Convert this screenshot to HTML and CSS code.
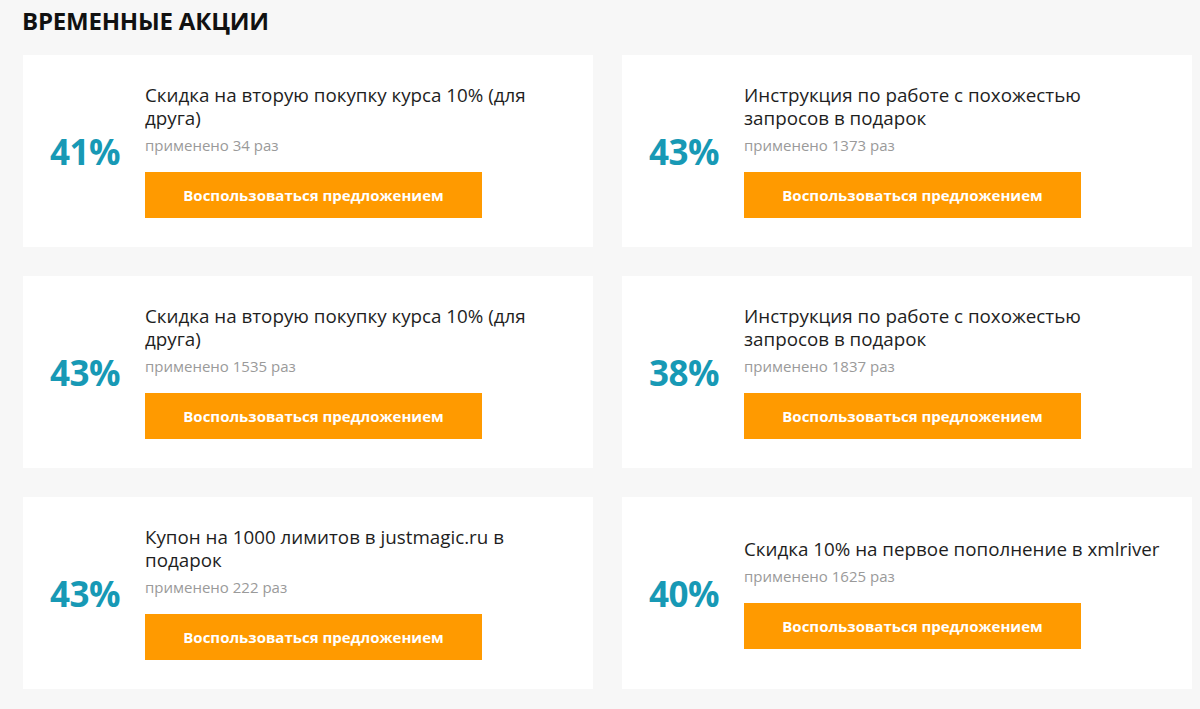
FILE: index.html
```html
<!DOCTYPE html>
<html lang="ru">
<head>
<meta charset="utf-8">
<title>Временные акции</title>
<link rel="stylesheet" href="styles.css">
</head>
<body>
<main class="page">
  <h1 class="heading">ВРЕМЕННЫЕ АКЦИИ</h1>
  <div class="grid">
    <div class="card">
      <div class="percent">41%</div>
      <div class="info">
        <div class="title">Скидка на вторую покупку курса 10% (для друга)</div>
        <div class="used">применено 34 раз</div>
        <a class="btn" href="#">Воспользоваться предложением</a>
      </div>
    </div>
    <div class="card">
      <div class="percent">43%</div>
      <div class="info">
        <div class="title">Инструкция по работе с похожестью запросов в подарок</div>
        <div class="used">применено 1373 раз</div>
        <a class="btn" href="#">Воспользоваться предложением</a>
      </div>
    </div>
    <div class="card">
      <div class="percent">43%</div>
      <div class="info">
        <div class="title">Скидка на вторую покупку курса 10% (для друга)</div>
        <div class="used">применено 1535 раз</div>
        <a class="btn" href="#">Воспользоваться предложением</a>
      </div>
    </div>
    <div class="card">
      <div class="percent">38%</div>
      <div class="info">
        <div class="title">Инструкция по работе с похожестью запросов в подарок</div>
        <div class="used">применено 1837 раз</div>
        <a class="btn" href="#">Воспользоваться предложением</a>
      </div>
    </div>
    <div class="card">
      <div class="percent">43%</div>
      <div class="info">
        <div class="title">Купон на 1000 лимитов в justmagic.ru в подарок</div>
        <div class="used">применено 222 раз</div>
        <a class="btn" href="#">Воспользоваться предложением</a>
      </div>
    </div>
    <div class="card">
      <div class="percent">40%</div>
      <div class="info">
        <div class="title">Скидка 10% на первое пополнение в xmlriver</div>
        <div class="used">применено 1625 раз</div>
        <a class="btn" href="#">Воспользоваться предложением</a>
      </div>
    </div>
  </div>
</main>
</body>
</html>
```
FILE: styles.css
```css
html, body {
  margin: 0;
  padding: 0;
  background: #f7f7f7;
}
body {
  font-family: "Open Sans", "Liberation Sans", sans-serif;
  color: #1e1e1e;
}
.page {
  padding: 5px 8px 20px 23px;
}
.heading {
  margin: 0 0 0 -1px;
  font-size: 24px;
  line-height: 32px;
  font-weight: 700;
  color: #111;
  letter-spacing: -0.2px;
}
.grid {
  margin-top: 18px;
  display: grid;
  grid-template-columns: 570px 570px;
  column-gap: 29px;
  row-gap: 29px;
}
.card {
  background: #fff;
  height: 192px;
  box-sizing: border-box;
  padding: 0 30px 0 27px;
  display: flex;
  align-items: center;
}
.percent {
  width: 95px;
  flex: none;
  font-size: 35px;
  font-weight: 700;
  color: #1799b5;
  letter-spacing: -0.5px;
  line-height: 1;
  margin-top: 0;
}
.info {
  flex: 1;
  display: flex;
  flex-direction: column;
  align-items: flex-start;
}
.title {
  font-size: 18.8px;
  line-height: 23px;
  color: #1e1e1e;
}
.used {
  margin-top: 5px;
  font-size: 15px;
  line-height: 20px;
  color: #9a9a9a;
}
.btn {
  margin-top: 17px;
  width: 337px;
  height: 46px;
  background: #ff9a00;
  color: #fff;
  font-size: 15px;
  font-weight: 700;
  text-decoration: none;
  display: flex;
  align-items: center;
  justify-content: center;
}
```
